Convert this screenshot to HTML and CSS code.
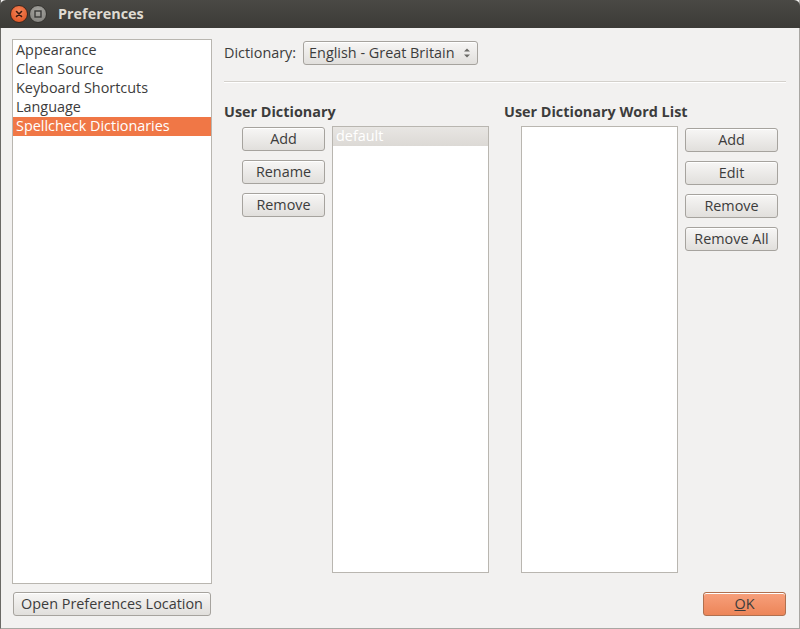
FILE: index.html
```html
<!DOCTYPE html>
<html>
<head>
<meta charset="utf-8">
<link rel="stylesheet" href="styles.css">
</head>
<body>
<div class="window">
  <div class="titlebar">
    <span class="wbtn close"><svg width="16" height="16" viewBox="0 0 16 16"><path d="M5.5 5.5 L10.5 10.5 M10.5 5.5 L5.5 10.5" stroke="#3a1a10" stroke-width="1.6" stroke-linecap="round"/></svg></span>
    <span class="wbtn mini"><svg width="16" height="16" viewBox="0 0 16 16"><rect x="5" y="5" width="6" height="6" fill="none" stroke="#3a3a38" stroke-width="1.4"/></svg></span>
    <span class="title">Preferences</span>
  </div>
  <div class="body">
    <div class="sidebar">
      <ul class="catlist">
        <li>Appearance</li>
        <li>Clean Source</li>
        <li>Keyboard Shortcuts</li>
        <li>Language</li>
        <li class="sel">Spellcheck Dictionaries</li>
      </ul>
      <button class="btn wide">Open Preferences Location</button>
    </div>
    <div class="main">
      <div class="dictrow">
        <span class="label">Dictionary:</span>
        <span class="combo">English - Great Britain<svg class="arrows" width="8" height="12" viewBox="0 0 8 12"><path d="M1 4.5 L4 1.5 L7 4.5 Z M1 7.5 L4 10.5 L7 7.5 Z" fill="#6b6a66"/></svg></span>
      </div>
      <div class="sep"></div>
      <div class="cols">
        <div class="col left">
          <div class="heading">User Dictionary</div>
          <div class="colbody">
            <div class="btncol">
              <button class="btn">Add</button>
              <button class="btn">Rename</button>
              <button class="btn">Remove</button>
            </div>
            <div class="listbox">
              <div class="row selgrey">default</div>
            </div>
          </div>
        </div>
        <div class="col right">
          <div class="heading">User Dictionary Word List</div>
          <div class="colbody">
            <div class="listbox words"></div>
            <div class="btncol r">
              <button class="btn">Add</button>
              <button class="btn">Edit</button>
              <button class="btn">Remove</button>
              <button class="btn">Remove All</button>
            </div>
          </div>
        </div>
      </div>
      <div class="footer">
        <button class="btn ok"><u>O</u>K</button>
      </div>
    </div>
  </div>
</div>
</body>
</html>
```
FILE: styles.css
```css
* { box-sizing: border-box; }
html, body { margin: 0; padding: 0; background: #f2f1f0; }
body { width: 800px; height: 629px; overflow: hidden; font-family: "Open Sans", "DejaVu Sans", sans-serif; font-size: 14.4px; color: #3c3c3c; }
.window { width: 800px; height: 629px; display: flex; flex-direction: column; border-right: 1px solid #a9a7a3; border-bottom: 1px solid #a9a7a3; border-left: 1px solid #6a6965; background: #f2f1f0; }
.titlebar { height: 28px; flex: none; background: linear-gradient(#4a4945, #3c3b37); border-radius: 6px 6px 0 0; display: flex; align-items: center; padding-left: 10px; margin: 0 -1px; }
.wbtn { width: 18px; height: 18px; border-radius: 50%; display: flex; align-items: center; justify-content: center; margin-right: 1px; }
.wbtn.close { background: radial-gradient(circle at 50% 35%, #f5865a, #dc4c1a); border: 1px solid #3a2820; }
.wbtn.mini { background: radial-gradient(circle at 50% 35%, #a8a7a2, #7c7b77); border: 1px solid #34332f; }
.title { margin-left: 10px; color: #dfdbd2; font-weight: bold; font-size: 14.4px; margin-top: -1px; }
.body { flex: 1; display: flex; padding: 11px 13px 12px 11px; }
.sidebar { width: 200px; display: flex; flex-direction: column; }
.catlist { flex: 1; margin: 0; padding: 1px 0 0; list-style: none; background: #fff; border: 1px solid #b9b6b0; }
.catlist li { height: 19px; line-height: 17px; padding-left: 3px; white-space: nowrap; }
.catlist li.sel { background: #f07746; color: #fff; }
.btn { font-family: inherit; font-size: 14.4px; color: #3c3c3c; height: 24px; padding: 0; border: 1px solid #a6a39e; border-radius: 3px; background: linear-gradient(#f7f6f5, #e1dfdc); box-shadow: inset 0 1px 0 #fff; line-height: 20px; }
.btn.wide { margin-top: 8px; width: 198px; margin-left: 1px; }
.main { flex: 1; margin-left: 12px; display: flex; flex-direction: column; }
.dictrow { display: flex; align-items: center; height: 25px; margin-top: 1px; }
.label { margin-right: 7px; }
.combo { height: 24px; width: 175px; border: 1px solid #a6a39e; border-radius: 3px; background: linear-gradient(#f7f6f5, #e1dfdc); box-shadow: inset 0 1px 0 #fff; display: flex; align-items: center; padding-left: 5px; position: relative; }
.arrows { position: absolute; right: 6px; top: 5px; }
.sep { background: #d4d1cc; border-bottom: 1px solid #fff; margin-top: 16px; height: 2px; }
.cols { display: flex; flex: 1; margin-top: 19px; }
.col { display: flex; flex-direction: column; }
.col.left { width: 280px; }
.heading { font-weight: bold; height: 19px; line-height: 18px; padding-top: 1px; }
.colbody { display: flex; flex: 1; margin-top: 5px; }
.btncol { display: flex; flex-direction: column; gap: 9px; width: 83px; }
.btncol .btn { width: 83px; }
.btncol { margin-left: 18px; padding-top: 1px; }
.btncol.r { margin-left: 7px; padding-top: 2px; width: 93px; }
.btncol.r .btn { width: 93px; }
.listbox { background: #fff; border: 1px solid #b9b6b0; width: 157px; margin-left: 7px; height: 447px; }
.listbox.words { margin-left: 17px; }
.row { height: 19px; line-height: 17px; padding-left: 3px; }
.row.selgrey { background: linear-gradient(#e8e6e3, #dcd9d5); color: #fff; }
.footer { display: flex; justify-content: flex-end; margin-top: 18px; }
.btn.ok { width: 83px; background: linear-gradient(#f7a07c, #ec8558); border-color: #b0704f; }
.btn.ok u { text-decoration: underline; }
```
